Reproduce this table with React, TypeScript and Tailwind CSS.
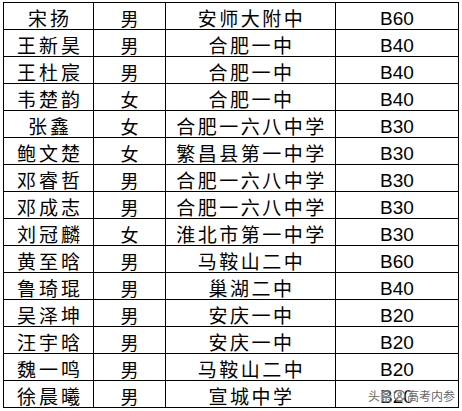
import React from "react";

const rows: [string, string, string, string][] = [
  ["宋扬", "男", "安师大附中", "B60"],
  ["王新昊", "男", "合肥一中", "B40"],
  ["王杜宸", "男", "合肥一中", "B40"],
  ["韦楚韵", "女", "合肥一中", "B40"],
  ["张鑫", "女", "合肥一六八中学", "B30"],
  ["鲍文楚", "女", "繁昌县第一中学", "B30"],
  ["邓睿哲", "男", "合肥一六八中学", "B30"],
  ["邓成志", "男", "合肥一六八中学", "B30"],
  ["刘冠麟", "女", "淮北市第一中学", "B30"],
  ["黄至晗", "男", "马鞍山二中", "B60"],
  ["鲁琦琨", "男", "巢湖二中", "B40"],
  ["吴泽坤", "男", "安庆一中", "B20"],
  ["汪宇晗", "男", "安庆一中", "B20"],
  ["魏一鸣", "男", "马鞍山二中", "B20"],
  ["徐晨曦", "男", "宣城中学", "B20"],
];

const cjk = "font-['KaiTi','Noto_Sans_CJK_SC',sans-serif]";

export default function App() {
  return (
    <div className="relative w-[462px] h-[411px] bg-white overflow-hidden">
      <div className="pt-[2px] pl-[3px]">
        <div className="w-[456px] border-l border-t border-black">
          {rows.map((r, i) => (
            <div key={i} className="grid grid-cols-[90px_72px_170px_123px] h-[27px]">
              <div
                className={`${cjk} border-r border-b border-black flex items-center justify-center pt-[3px] text-[19px] leading-none tracking-[3px] pl-[3px] text-black`}
              >
                {r[0]}
              </div>
              <div
                className={`${cjk} border-r border-b border-black flex items-center justify-center pt-[3px] text-[18px] leading-none text-black`}
              >
                {r[1]}
              </div>
              <div
                className={`${cjk} border-r border-b border-black flex items-center justify-center pt-[3px] text-[19px] leading-none tracking-[2.5px] pl-[2px] text-black`}
              >
                {r[2]}
              </div>
              <div className="font-['Liberation_Sans',Arial,sans-serif] border-r border-b border-black flex items-center justify-center pt-[4px] text-[19px] leading-none text-black">
                {r[3]}
              </div>
            </div>
          ))}
        </div>
      </div>
      <div className="absolute left-[368px] top-[389px] flex items-center whitespace-nowrap font-['Noto_Sans_CJK_SC',sans-serif] text-[12px] leading-none text-[#666] [text-shadow:0_0_2px_#fff,0_0_2px_#fff]">
        <span>头条</span>
        <svg width="13" height="13" viewBox="0 0 16 16" className="shrink-0 mx-[1px]">
          <circle cx="8" cy="8" r="6.5" fill="rgba(255,255,255,0.6)" stroke="#777" strokeWidth="1.4" />
          <circle cx="8" cy="6.5" r="2" fill="none" stroke="#777" strokeWidth="1.3" />
          <path d="M4.5 12.2c.8-1.8 2-2.6 3.5-2.6s2.7.8 3.5 2.6" fill="none" stroke="#777" strokeWidth="1.3" />
        </svg>
        <span>高考内参</span>
      </div>
    </div>
  );
}
